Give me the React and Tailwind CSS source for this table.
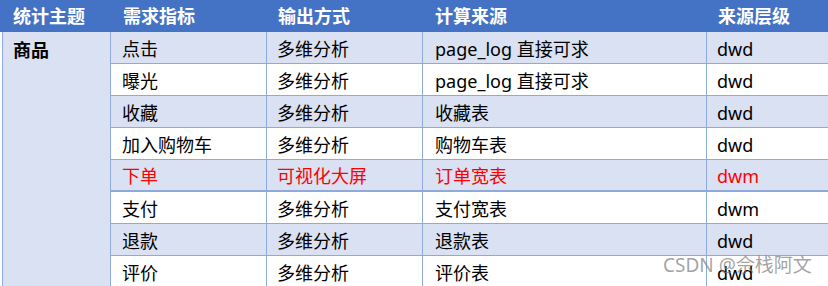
import React from "react";

const rows = [
  { name: "点击", out: "多维分析", src: "page_log 直接可求", level: "dwd" },
  { name: "曝光", out: "多维分析", src: "page_log 直接可求", level: "dwd" },
  { name: "收藏", out: "多维分析", src: "收藏表", level: "dwd" },
  { name: "加入购物车", out: "多维分析", src: "购物车表", level: "dwd" },
  { name: "下单", out: "可视化大屏", src: "订单宽表", level: "dwm", red: true },
  { name: "支付", out: "多维分析", src: "支付宽表", level: "dwm" },
  { name: "退款", out: "多维分析", src: "退款表", level: "dwd" },
  { name: "评价", out: "多维分析", src: "评价表", level: "dwd" },
];

const font = { fontFamily: '"Noto Sans", "Noto Sans CJK SC", sans-serif' };

export default function App() {
  return (
    <div className="relative w-[828px] h-[286px] overflow-hidden bg-white text-[18px] leading-none text-black" style={font}>
      {/* header */}
      <div className="grid grid-cols-[111px_156px_156px_284px_1fr] h-[32px] bg-[#4472C4] text-white font-bold items-center">
        <div className="pl-[13px]">统计主题</div>
        <div className="pl-[12px]">需求指标</div>
        <div className="pl-[11px]">输出方式</div>
        <div className="pl-[12px]">计算来源</div>
        <div className="pl-[11px]">来源层级</div>
      </div>

      <div className="flex">
        <div className="ml-[2px] w-[109px] shrink-0 border-l border-r border-[#8EA9DB] bg-[#D9E1F2] pl-[10px] pt-[9px] font-bold h-[260px]">
          商品
        </div>
        <div className="flex-1 flex flex-col">
          {rows.map((r, i) => (
            <div
              key={i}
              className={
                "grid grid-cols-[155px_156px_284px_1fr] h-[32px] items-center " +
                (i % 2 === 0 ? "bg-[#D9E1F2] " : "bg-white ") +
                (r.red ? "text-[#FF0000] border-b-2 border-[#8EA9DB] " : "border-b border-[#8EA9DB] ") +
                (i === 7 ? "border-b-0" : "")
              }
            >
              <div className="pl-[11px] pt-[2px]">{r.name}</div>
              <div className="h-full flex items-center pl-[10px] pt-[2px] border-l border-[#8EA9DB]">{r.out}</div>
              <div className="h-full flex items-center pl-[12px] pt-[2px] border-l border-[#8EA9DB]">{r.src}</div>
              <div className="h-full flex items-center pl-[10px] pt-[2px] border-l border-[#8EA9DB]">{r.level}</div>
            </div>
          ))}
        </div>
      </div>

      <div className="absolute left-[663px] top-[256px] text-[19px] text-[#7a7a7a]/70 whitespace-nowrap">
        CSDN @佘栈阿文
      </div>
    </div>
  );
}
